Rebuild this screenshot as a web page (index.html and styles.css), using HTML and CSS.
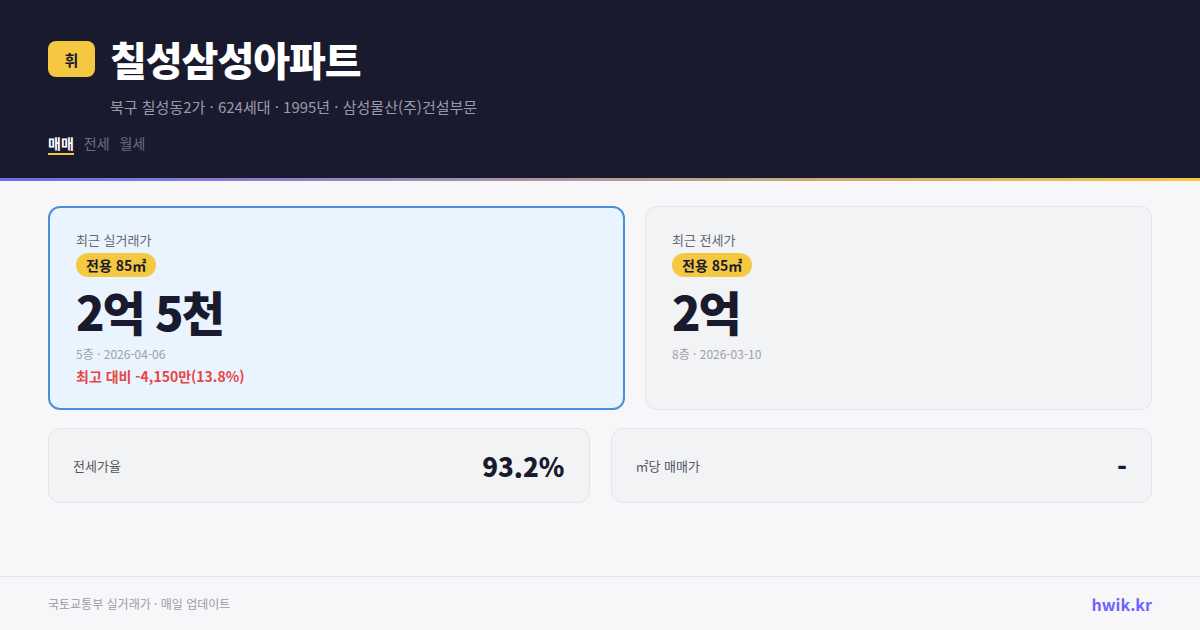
FILE: index.html
```html
<!DOCTYPE html>
<html lang="ko">
<head>
<meta charset="utf-8">
<link rel="stylesheet" href="styles.css">
</head>
<body>
<div class="page">
  <header class="header">
    <div class="title-row">
      <div class="logo">휘</div>
      <h1 class="title">칠성삼성아파트</h1>
    </div>
    <p class="subtitle">북구 칠성동2가 · 624세대 · 1995년 · 삼성물산(주)건설부문</p>
    <nav class="tabs">
      <span class="tab active">매매</span>
      <span class="tab">전세</span>
      <span class="tab">월세</span>
    </nav>
  </header>
  <div class="accent"></div>
  <main class="main">
    <div class="top-row">
      <section class="card card-primary">
        <div class="label">최근 실거래가</div>
        <span class="badge">전용 85㎡</span>
        <div class="price">2억 5천</div>
        <div class="meta">5층 · 2026-04-06</div>
        <div class="diff">최고 대비 -4,150만(13.8%)</div>
      </section>
      <section class="card">
        <div class="label">최근 전세가</div>
        <span class="badge">전용 85㎡</span>
        <div class="price">2억</div>
        <div class="meta">8층 · 2026-03-10</div>
      </section>
    </div>
    <div class="bottom-row">
      <section class="stat">
        <span class="stat-label">전세가율</span>
        <span class="stat-value">93.2%</span>
      </section>
      <section class="stat">
        <span class="stat-label">㎡당 매매가</span>
        <span class="stat-value">-</span>
      </section>
    </div>
  </main>
  <footer class="footer">
    <span class="source">국토교통부 실거래가 · 매일 업데이트</span>
    <span class="brand">hwik.kr</span>
  </footer>
</div>
</body>
</html>
```

FILE: styles.css
```css
* { box-sizing: border-box; }
html, body { margin: 0; padding: 0; }
body {
  width: 1200px;
  height: 630px;
  overflow: hidden;
  background: #f7f7f9;
  font-family: "Noto Sans CJK KR", "Noto Sans", sans-serif;
  color: #1a1a2e;
}
.page {
  display: flex;
  flex-direction: column;
  height: 630px;
}
.header {
  background: #1a1a2e;
  height: 178px;
  padding: 36px 48px 0;
}
.title-row {
  display: flex;
  align-items: center;
  gap: 15px;
}
.logo {
  width: 47px;
  height: 36px;
  border-radius: 8px;
  background: #f5c842;
  color: #1a1a2e;
  font-weight: 700;
  font-size: 15px;
  display: flex;
  align-items: center;
  justify-content: center;
}
.title {
  margin: 0;
  color: #ffffff;
  font-size: 40px;
  font-weight: 900;
  letter-spacing: -1px;
  line-height: 46px;
}
.subtitle {
  margin: 15px 0 0 62px;
  color: #9a9aab;
  font-size: 15px;
  line-height: 20px;
}
.tabs {
  display: flex;
  gap: 10px;
  margin-top: 16px;
}
.tab {
  font-size: 14px;
  line-height: 20px;
  color: #6e6e80;
  border-bottom: 2px solid transparent;
}
.tab.active {
  color: #ffffff;
  font-weight: 700;
  border-bottom-color: #f5c842;
}
.accent {
  height: 3px;
  background: linear-gradient(90deg, #6c6cf0, #f5c842);
}
.main {
  flex: 1;
  padding: 25px 48px 0;
  display: flex;
  flex-direction: column;
  gap: 18px;
}
.top-row {
  display: grid;
  grid-template-columns: 577px 1fr;
  gap: 20px;
}
.card {
  height: 204px;
  border-radius: 12px;
  background: #f2f3f5;
  border: 1px solid #e3e4e8;
  padding: 24px 26px;
  display: flex;
  flex-direction: column;
  align-items: flex-start;
}
.card-primary {
  background: #eaf4ff;
  border: 2px solid #4a90d9;
  padding: 23px 26px;
}
.label {
  font-size: 13px;
  color: #666670;
  line-height: 18px;
}
.badge {
  margin-top: 4px;
  background: #f5c842;
  color: #1a1a2e;
  font-size: 14px;
  font-weight: 700;
  line-height: 24px;
  padding: 0 10px;
  border-radius: 12px;
}
.price {
  margin-top: 6px;
  font-size: 47px;
  font-weight: 900;
  letter-spacing: -2px;
  line-height: 56px;
  color: #1a1a2e;
}
.meta {
  margin-top: 6px;
  font-size: 12px;
  color: #a0a0aa;
  line-height: 18px;
}
.diff {
  margin-top: 3px;
  font-size: 14px;
  font-weight: 700;
  color: #e84545;
  line-height: 20px;
}
.bottom-row {
  display: grid;
  grid-template-columns: 1fr 1fr;
  gap: 21px;
}
.stat {
  height: 75px;
  border-radius: 12px;
  background: #f2f3f5;
  border: 1px solid #e3e4e8;
  padding: 0 24px;
  display: flex;
  align-items: center;
  justify-content: space-between;
}
.stat-label {
  font-size: 13px;
  color: #555560;
}
.stat-value {
  font-size: 26px;
  font-weight: 800;
  color: #1a1a2e;
}
.footer {
  height: 54px;
  border-top: 1px solid #e5e5ea;
  padding: 0 48px;
  display: flex;
  align-items: center;
  justify-content: space-between;
}
.source {
  font-size: 12px;
  color: #9a9aa6;
}
.brand {
  font-size: 16px;
  font-weight: 700;
  color: #6c63ff;
}
```
